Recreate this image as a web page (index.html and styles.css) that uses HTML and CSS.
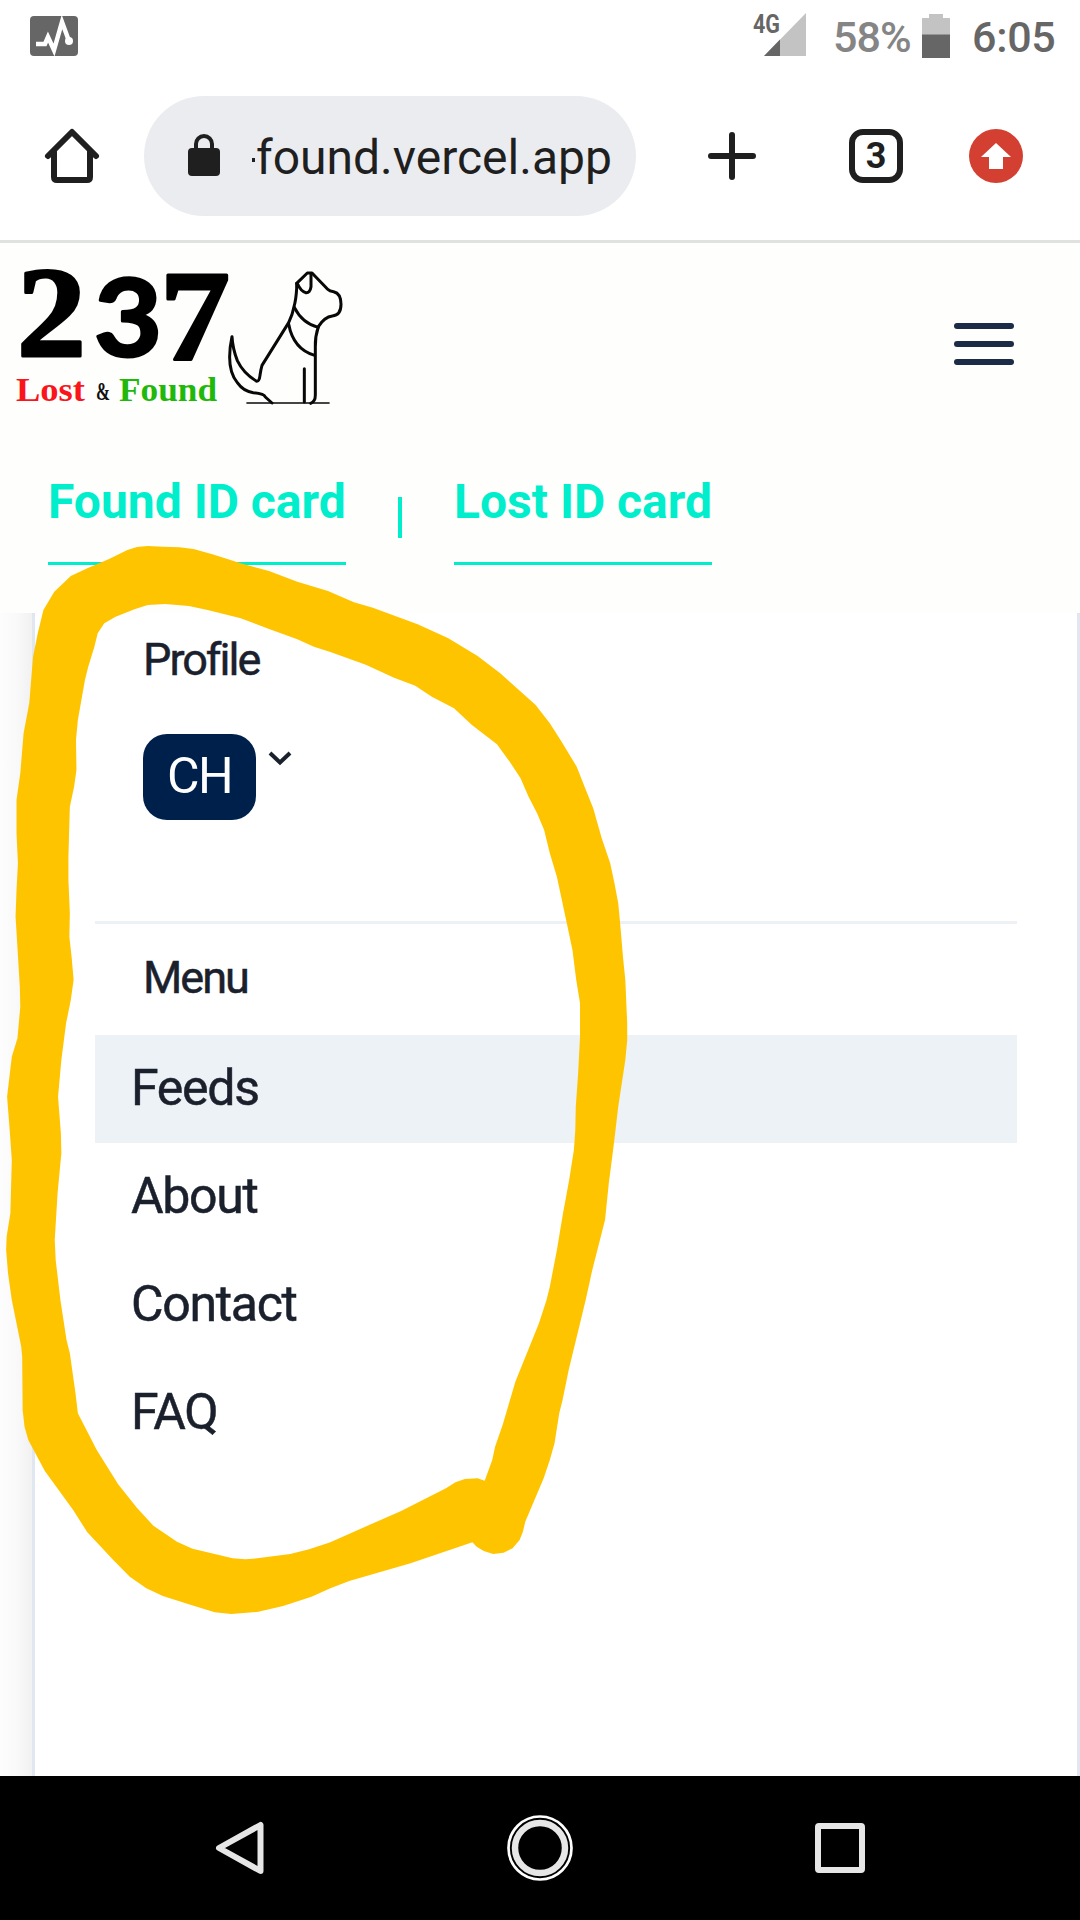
FILE: index.html
```html
<!DOCTYPE html>
<html lang="en">
<head>
<meta charset="utf-8">
<title>237 Lost &amp; Found</title>
<link rel="stylesheet" href="styles.css">
</head>
<body>
<div class="phone">
  <div class="status">
    <svg class="app-icon" width="48" height="40" viewBox="0 0 48 40"><rect width="48" height="40" rx="4" fill="#666"/><path d="M6 28h9l3-7 6 13 8-28 7 19" fill="none" stroke="#fff" stroke-width="4.5"/><circle cx="39" cy="25" r="4" fill="#fff"/></svg>
    <svg class="signal" width="54" height="45" viewBox="0 0 54 45"><path d="M53 0v43H11z" fill="#c3c3c3"/><path d="M27 26.500V43H11z" fill="#666"/><text x="0" y="19.500" class="net" textLength="27" lengthAdjust="spacingAndGlyphs">4G</text></svg>
    <span class="percent">58%</span>
    <svg class="battery" width="28" height="44" viewBox="0 0 28 44"><path d="M0 4h7V0h14v4h7v17H0z" fill="#c3c3c3"/><path d="M0 20.500h28V44H0z" fill="#666"/></svg>
    <span class="clock">6:05</span>
  </div>
  <div class="toolbar">
    <svg class="home" width="54" height="54" viewBox="0 0 54 54" fill="none" stroke="#1f1f1f" stroke-width="6" stroke-linecap="round" stroke-linejoin="round"><path d="M3 27 27 3l24 24"/><path d="M9 23v25q0 3 3 3h30q3 0 3-3V23"/></svg>
    <div class="url-pill">
      <svg class="lock" width="32" height="42" viewBox="0 0 32 42"><rect y="14" width="32" height="28" rx="4" fill="#1f1f1f"/><path d="M8 16v-6a8 8 0 0 1 16 0v6" fill="none" stroke="#1f1f1f" stroke-width="4"/></svg>
      <i class="url-cut"></i><span class="url">found.vercel.app</span>
    </div>
    <svg class="plus" width="48" height="48" viewBox="0 0 48 48" stroke="#1f1f1f" stroke-width="6" stroke-linecap="round"><path d="M24 3v42M3 24h42"/></svg>
    <div class="tabs-count">3</div>
    <svg class="update" width="54" height="54" viewBox="0 0 54 54"><circle cx="27" cy="27" r="27" fill="#d33f31"/><path d="M27 14 42 28h-8v12H20V28h-8z" fill="#fff"/></svg>
  </div>
  <header class="site-header">
    <div class="brand-row">
      <svg class="logo" width="350" height="170" viewBox="0 0 350 170">
        <g class="numerals">
          <text class="serif-num" x="17" y="113" textLength="69" lengthAdjust="spacingAndGlyphs">2</text>
          <text class="round-num" x="94" y="113" textLength="68" lengthAdjust="spacingAndGlyphs">3</text>
          <text class="serif-num" x="160" y="117" textLength="70" lengthAdjust="spacingAndGlyphs">7</text>
        </g>
        <text class="word lost" x="16" y="158" textLength="69" lengthAdjust="spacingAndGlyphs">Lost</text>
        <text class="word amp" x="96" y="157" textLength="14" lengthAdjust="spacingAndGlyphs">&amp;</text>
        <text class="word found" x="119" y="158" textLength="98" lengthAdjust="spacingAndGlyphs">Found</text>
        <g transform="translate(0 -3) scale(.33333)" fill="none" stroke="#080808" stroke-width="9" stroke-linejoin="round" stroke-linecap="round">
          <path d="M890 130 922 99h14l47 49q6 6 18 7 22 5 22 38 0 33-26 35-24 3-42 32-10 30-9 60v145q0 20-14 25"/>
          <path d="M933 102v38q-3 20-16 18-15-5-24-26"/>
          <path d="M890 130v16q-2 34-8 54-4 22-16 48l-80 128q-4 14-6 30-2 18-10 18-40-24-58-62-14-36-16-72-20 94 16 138 18 26 48 30 32 2 36 13l20 18"/>
          <path d="M883 202q24 48 72 60M866 252q14 76 78 94M913 386v100"/>
          <path d="M741 489h246" stroke-width="5"/>
        </g>
      </svg>
      <div class="burger"><i></i><i></i><i></i></div>
    </div>
    <nav class="card-links">
      <a class="found-link"><span>Found ID card</span></a>
      <i class="separator"></i>
      <a class="lost-link"><span>Lost ID card</span></a>
    </nav>
  </header>
  <main class="page">
    <div class="page-edge"></div>
    <section class="drawer">
      <h2 class="label profile"><span>Profile</span></h2>
      <div class="account">
        <span class="avatar"><span>CH</span></span>
        <svg class="chevron" width="24" height="14" viewBox="0 0 24 14"><path d="m2 2 10 9.500L22 2" fill="none" stroke="#1a202c" stroke-width="4"/></svg>
      </div>
      <h2 class="label menu-label"><span>Menu</span></h2>
      <ul class="menu">
        <li class="active"><span>Feeds</span></li>
        <li><span>About</span></li>
        <li><span>Contact</span></li>
        <li><span>FAQ</span></li>
      </ul>
    </section>
  </main>
  <div class="sysnav">
    <svg width="50" height="56" viewBox="0 0 50 56"><path d="M45.500 5v46L4 28z" fill="none" stroke="#e6e6e6" stroke-width="6" stroke-linejoin="round"/></svg>
    <svg width="68" height="68" viewBox="0 0 68 68" fill="none"><circle cx="34" cy="34" r="31.500" stroke="#fff" stroke-width="2.700"/><circle cx="34" cy="34" r="25" stroke="#e6e6e6" stroke-width="6.500"/></svg>
    <svg width="50" height="50" viewBox="0 0 50 50"><rect x="3" y="3" width="44" height="44" rx="1" fill="none" stroke="#e6e6e6" stroke-width="6"/></svg>
  </div>
  <svg class="marker" width="1080" height="1920" viewBox="0 0 1080 1920"><path transform="translate(0 440) scale(.47194 .33333)" fill="#ffc400" fill-rule="evenodd" d="M313 318 345 320 380 322 410 327 450 343 510 370 570 393 630 425 695 453 750 487 790 503 885 553 950 595 1012 648 1060 700 1135 795 1165 850 1190 905 1222 980 1240 1045 1257 1105 1275 1195 1293 1270 1302 1330 1310 1390 1314 1450 1320 1550 1325 1620 1329 1750 1329 1800 1325 1860 1310 2000 1300 2120 1290 2230 1282 2340 1255 2490 1241 2580 1205 2790 1192 2880 1185 2920 1175 3010 1165 3060 1152 3115 1128 3195 1113 3245 1108 3275 1101 3300 1086 3325 1067 3338 1045 3342 1025 3333 1010 3320 1001 3307 870 3370 740 3423 700 3445 660 3470 600 3498 545 3516 490 3522 455 3517 400 3493 345 3468 310 3445 275 3410 240 3360 185 3277 155 3210 95 3093 60 3000 52 2960 48 2910 47 2750 45 2720 25 2580 17 2500 13 2430 14 2390 22 2320 25 2160 20 2060 15 1970 20 1910 25 1850 37 1795 43 1700 42 1640 33 1430 35 1350 38 1270 35 1180 35 1080 43 1000 50 880 62 790 70 650 80 580 92 510 115 455 150 408 185 385 230 358 270 330 290 321ZM313 495 350 492 400 498 440 510 510 535 570 567 630 598 665 620 700 636 775 674 835 713 880 737 915 770 962 805 1000 855 1053 913 1080 965 1103 1015 1120 1070 1138 1120 1153 1170 1165 1240 1180 1310 1201 1450 1213 1530 1221 1620 1229 1690 1229 1790 1225 1900 1220 2000 1219 2070 1216 2130 1206 2220 1193 2320 1180 2430 1165 2540 1158 2580 1142 2650 1092 2825 1065 2955 1049 3020 1043 3060 1027 3122 1012 3115 985 3117 965 3127 945 3145 850 3213 750 3275 700 3307 655 3328 615 3342 545 3355 520 3358 493 3355 408 3326 375 3305 325 3257 290 3203 250 3132 205 3030 165 2920 160 2860 148 2740 141 2700 128 2580 118 2460 116 2400 122 2260 130 2140 129 2080 123 1970 130 1860 140 1750 150 1680 156 1620 152 1555 147 1490 148 1420 145 1320 145 1250 148 1100 157 1040 162 990 161 900 165 840 180 720 187 680 200 620 207 580 221 550 245 530 285 508Z"/></svg>
</div>
</body>
</html>
```
FILE: styles.css
```css
* { box-sizing: border-box; }
body { margin: 0; background: #fff; font-family: Roboto, sans-serif; }
svg { display: block; flex: none; overflow: visible; }
.phone { position: relative; width: 1080px; height: 1920px; overflow: hidden; display: flex; flex-direction: column; background: #fff; }

/* Android status bar */
.status { height: 76px; display: flex; align-items: center; padding: 0 26px 0 30px; color: #666; font-size: 43px; font-weight: 500; line-height: 74px; }
.status span { height: 76px; }
.app-icon { margin-top: -4px; }
.signal { margin: -5px 26px 0 auto; }
.net { font: 700 26px Roboto, sans-serif; fill: #666; }
.percent { color: #858585; width: 76px; margin-right: 13px; letter-spacing: -1px; white-space: nowrap; }
.battery { margin: -4px 22px 0 0; }
.clock { width: 82px; letter-spacing: -0.3px; white-space: nowrap; }

/* Browser toolbar */
.toolbar { height: 167px; display: flex; align-items: center; padding: 0 57px 4px 45px; border-bottom: 3px solid #e0e2df; }
.url-pill { width: 492px; height: 120px; border-radius: 60px; margin-left: 45px; padding-left: 44px; background: #ebecf0; display: flex; align-items: center; color: #1f1f1f; font-size: 48px; }
.lock { margin-top: -2px; }
.url-cut { width: 3px; height: 4px; margin: 7px 1px 0 32px; background: #1f1f1f; }
.url { padding-top: 3px; white-space: nowrap; }
.plus { margin-left: 72px; }
.tabs-count { width: 54px; height: 54px; margin: 0 66px 0 93px; border: 6px solid #1f1f1f; border-radius: 14px; color: #1f1f1f; font-weight: 700; font-size: 36px; line-height: 43px; text-align: center; }

/* Site header */
.site-header { height: 370px; background: #fefefd; display: flex; flex-direction: column; }
.brand-row { display: flex; justify-content: space-between; height: 200px; }
.burger { display: flex; flex-direction: column; gap: 12px; margin: 80px 66px 0 0; }
.burger i { width: 60px; height: 6px; border-radius: 3px; background: #1c2c46; }
.numerals { fill: #000; stroke: #000; stroke-linejoin: round; }
.serif-num { font: 700 129px "Liberation Serif", serif; stroke-width: 3px; }
.round-num { font: 700 108px Lato, sans-serif; stroke-width: 3px; }
.word { font: 700 34px "Liberation Serif", serif; }
.lost { fill: #f9151a; }
.amp { font-size: 25px; fill: #111; }
.found { fill: #1fb80b; }
.card-links { display: flex; align-items: flex-start; padding: 29px 0 0 48px; color: #00eecb; font-size: 48px; font-weight: 700; line-height: 60px; }
.card-links a { height: 93px; border-bottom: 3px solid #00eecb; white-space: nowrap; }
.found-link { width: 298px; }
.lost-link { width: 258px; }
.separator { width: 4px; height: 41px; margin: 25px 52px 0; background: #00eecb; }

/* Drawer */
.page { flex: 1; display: flex; }
.page-edge { width: 32px; background: linear-gradient(90deg, #fdfdfd, #f9f9f9 55%, #f1f1f1); }
.drawer { flex: 1; border: solid #e0e7f0; border-width: 0 3px; padding: 17px 60px 0; background: #fff; color: #1a202c; }
.label { margin: 0; padding-left: 48px; font-size: 45px; font-weight: 400; line-height: 60px; letter-spacing: -2px; -webkit-text-stroke: 0.5px; }
.account { display: flex; align-items: flex-start; height: 231px; padding-left: 48px; padding-top: 44px; }
.avatar { width: 113px; height: 86px; border-radius: 24px; background: #00204c; color: #fff; font-size: 50px; line-height: 84px; letter-spacing: -1.500px; text-align: center; }
.chevron { margin: 17px 0 0 12px; }
.menu-label { height: 114px; border-top: 3px solid #edf1f6; padding-top: 24px; }
.menu { list-style: none; margin: 0; padding: 0; font-size: 50px; line-height: 106px; letter-spacing: -1.3px; -webkit-text-stroke: 0.5px; }
.menu li { height: 108px; padding-left: 36px; }
.menu .active { background: #edf2f6; }

/* Android navigation bar */
.sysnav { height: 144px; background: #000; display: flex; align-items: center; justify-content: space-between; padding: 0 215px; }

.marker { position: absolute; inset: 0; pointer-events: none; }
```
